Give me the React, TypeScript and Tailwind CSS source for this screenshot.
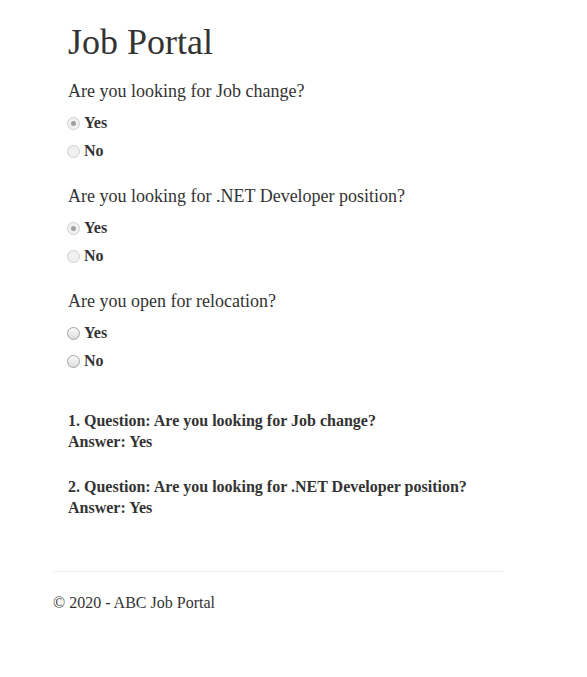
import React from "react";

type Radio = { label: string; checked?: boolean; disabled?: boolean };

const questions: { text: string; options: Radio[] }[] = [
  {
    text: "Are you looking for Job change?",
    options: [
      { label: "Yes", checked: true, disabled: true },
      { label: "No", disabled: true },
    ],
  },
  {
    text: "Are you looking for .NET Developer position?",
    options: [
      { label: "Yes", checked: true, disabled: true },
      { label: "No", disabled: true },
    ],
  },
  {
    text: "Are you open for relocation?",
    options: [{ label: "Yes" }, { label: "No" }],
  },
];

const answers = [
  "1. Question: Are you looking for Job change?",
  "2. Question: Are you looking for .NET Developer position?",
];

const RadioDot = ({ checked, disabled }: Radio) => (
  <span
    className={
      disabled
        ? "flex h-[13px] w-[13px] items-center justify-center rounded-full border border-[#cfcfcf] bg-[#f0f0f0]"
        : "flex h-[13px] w-[13px] items-center justify-center rounded-full border border-[#a3a3a3] bg-gradient-to-b from-[#fafafa] to-[#dcdcdc]"
    }
  >
    {checked && <span className="h-[5px] w-[5px] rounded-full bg-[#a0a0a0]"></span>}
  </span>
);

const App = () => {
  return (
    <div className="min-h-[677px] w-full bg-white font-['Liberation_Serif',serif] text-[#333]">
      <div className="ml-[53px] w-[450px]">
        <div className="pl-[15px]">
          <h1 className="pt-[22px] text-[36px] leading-[40px]">Job Portal</h1>
          <div className="mt-[17px] flex flex-col gap-[23px]">
            {questions.map((q) => (
              <div key={q.text}>
                <p className="text-[18px] leading-[24px]">{q.text}</p>
                <div className="mt-[10px] flex flex-col gap-[8px]">
                  {q.options.map((o) => (
                    <label key={o.label} className="-ml-px flex h-[20px] items-center gap-[4px] text-[16px] font-bold leading-[20px]">
                      <RadioDot {...o} />
                      <span>{o.label}</span>
                    </label>
                  ))}
                </div>
              </div>
            ))}
          </div>
          <div className="mt-[39px] flex flex-col gap-[24px]">
            {answers.map((a) => (
              <div key={a} className="text-[16px] font-bold leading-[21px]">
                <p>{a}</p>
                <p>Answer: Yes</p>
              </div>
            ))}
          </div>
        </div>
        <hr className="mt-[53px] border-t border-[#eee]" />
        <footer className="pt-[20px]">
          <p className="text-[16px] leading-[22px]">© 2020 - ABC Job Portal</p>
        </footer>
      </div>
    </div>
  );
};

export default App;
